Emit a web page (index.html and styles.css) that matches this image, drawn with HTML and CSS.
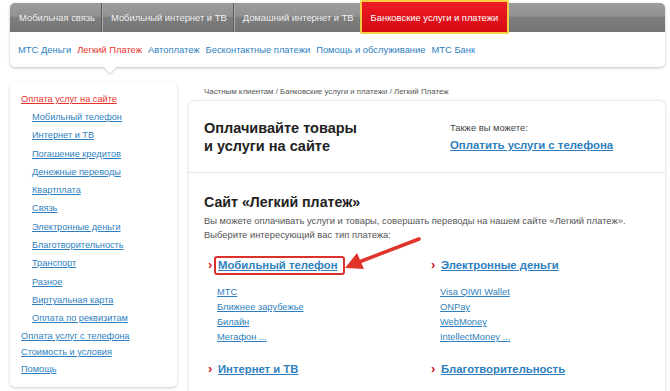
FILE: index.html
```html
<!DOCTYPE html>
<html lang="ru">
<head>
    <meta charset="UTF-8">
    <title>Легкий Платеж</title>
    <link rel="stylesheet" href="styles.css">
</head>
<body>
    <div class="header">
        <div class="topnav">
            <a class="tab">Мобильная связь</a>
            <a class="tab">Мобильный интернет и ТВ</a>
            <a class="tab">Домашний интернет и ТВ</a>
            <a class="tab active">Банковские услуги и платежи</a>
        </div>
        <div class="subnav">
            <a>МТС Деньги</a>
            <a class="current">Легкий Платеж</a>
            <a>Автоплатеж</a>
            <a>Бесконтактные платежи</a>
            <a>Помощь и обслуживание</a>
            <a>МТС Банк</a>
            <span class="notch"></span>
        </div>
    </div>

    <div class="page">
        <div class="sidebar">
            <a class="side-top current">Оплата услуг на сайте</a>
            <a class="side-sub">Мобильный телефон</a>
            <a class="side-sub">Интернет и ТВ</a>
            <a class="side-sub">Погашение кредитов</a>
            <a class="side-sub">Денежные переводы</a>
            <a class="side-sub">Квартплата</a>
            <a class="side-sub">Связь</a>
            <a class="side-sub">Электронные деньги</a>
            <a class="side-sub">Благотворительность</a>
            <a class="side-sub">Транспорт</a>
            <a class="side-sub">Разное</a>
            <a class="side-sub">Виртуальная карта</a>
            <a class="side-sub">Оплата по реквизитам</a>
            <a class="side-top">Оплата услуг с телефона</a>
            <a class="side-top">Стоимость и условия</a>
            <a class="side-top">Помощь</a>
        </div>

        <div class="content">
            <div class="crumbs">Частным клиентам / Банковские услуги и платежи / Легкий Платеж</div>
            <div class="panel">
                <div class="panel-top">
                    <h1>Оплачивайте товары<br>и услуги на сайте</h1>
                    <div class="also">
                        <div class="also-label">Также вы можете:</div>
                        <a class="also-link">Оплатить услуги с телефона</a>
                    </div>
                </div>
                <div class="panel-body">
                    <h2>Сайт «Легкий платеж»</h2>
                    <p>Вы можете оплачивать услуги и товары, совершать переводы на нашем сайте «Легкий платеж».<br>Выберите интересующий вас тип платежа:</p>
                    <div class="types">
                        <div class="type">
                            <div class="type-title"><span class="chev">›</span><a class="marked">Мобильный телефон</a></div>
                            <ul>
                                <li><a>МТС</a></li>
                                <li><a>Ближнее зарубежье</a></li>
                                <li><a>Билайн</a></li>
                                <li><a>Мегафон ...</a></li>
                            </ul>
                        </div>
                        <div class="type">
                            <div class="type-title"><span class="chev">›</span><a>Электронные деньги</a></div>
                            <ul>
                                <li><a>Visa QIWI Wallet</a></li>
                                <li><a>ONPay</a></li>
                                <li><a>WebMoney</a></li>
                                <li><a>IntellectMoney ...</a></li>
                            </ul>
                        </div>
                        <div class="type">
                            <div class="type-title"><span class="chev">›</span><a>Интернет и ТВ</a></div>
                        </div>
                        <div class="type">
                            <div class="type-title"><span class="chev">›</span><a>Благотворительность</a></div>
                        </div>
                    </div>
                </div>
            </div>
        </div>

        <!-- annotation arrow -->
        <svg class="arrow" width="80" height="40" viewBox="0 0 80 40">
            <line x1="76" y1="3" x2="16" y2="26" stroke="#e2332b" stroke-width="3.5" stroke-linecap="round"/>
            <polygon points="2,32 14,17 21,33" fill="#e2332b"/>
        </svg>
    </div>
</body>
</html>
```

FILE: styles.css
```css
body {
    margin: 0;
    background: #fff;
    font-family: "Liberation Sans", Arial, sans-serif;
    color: #333;
}
a {
    color: #2f7fc0;
    text-decoration: underline;
}

/* header */
.header {
    margin: 3px 5px 0 10px;
    border-radius: 5px;
    box-shadow: 0 1px 3px rgba(0,0,0,0.25);
    background: #fff;
    position: relative;
}
.topnav {
    display: flex;
    height: 29px;
    background: linear-gradient(#9c9c9c 0%, #929292 45%, #7e7e7e 50%, #747474 100%);
    border-radius: 5px 5px 0 0;
}
.topnav .tab {
    display: flex;
    align-items: center;
    padding: 0 6px 0 9px;
    font-size: 9.4px;
    color: #f2f2f2;
    text-decoration: none;
    border-right: 1px solid #5f5f5f;
    box-shadow: 1px 0 0 #a8a8a8;
}
.topnav .tab.active {
    margin-top: -3px;
    margin-left: -1px;
    height: 30px;
    padding: 0 9px;
    background: linear-gradient(#ee1c25, #d50a13);
    border: 2px solid #f4cf3f;
    border-radius: 2px;
    box-shadow: none;
    color: #fff;
}
.subnav {
    display: flex;
    align-items: center;
    gap: 6px;
    height: 35px;
    padding-left: 8px;
    font-size: 9.4px;
}
.subnav a {
    text-decoration: none;
    color: #2f7fc0;
}
.subnav a.current {
    color: #e8312a;
}
.notch {
    position: absolute;
    left: 96px;
    bottom: -5px;
    width: 8px;
    height: 8px;
    background: #fff;
    transform: rotate(45deg);
    box-shadow: 1px 1px 1px rgba(0,0,0,0.2);
}

/* page */
.page {
    display: flex;
    gap: 12px;
    margin: 15px 5px 0 10px;
    position: relative;
}
.sidebar {
    width: 156px;
    flex-shrink: 0;
    padding: 10px 0 8px 11px;
    border-radius: 5px;
    box-shadow: 0 1px 3px rgba(0,0,0,0.2);
    display: flex;
    flex-direction: column;
    align-items: flex-start;
    font-size: 9.2px;
    height: 287px;
}
.sidebar a {
    line-height: 18.3px;
}
.sidebar .side-sub {
    margin-left: 11px;
}
.sidebar .side-top {
    line-height: 16.7px;
}
.sidebar .side-top.current {
    color: #e8312a;
    line-height: 14px;
    margin-bottom: 2px;
}

.content {
    flex: 1;
}
.crumbs {
    font-size: 7.9px;
    color: #555;
    padding: 5px 0 0 15px;
    height: 14px;
}
.panel {
    border-radius: 5px;
    box-shadow: 0 0 3px rgba(0,0,0,0.22);
    height: 300px;
}
.panel-top {
    display: flex;
    height: 71px;
    border-bottom: 1px solid #e3e3e3;
    padding-left: 15px;
}
.panel-top h1 {
    margin: 18px 0 0;
    width: 246px;
    font-size: 14.5px;
    line-height: 18px;
    color: #222;
}
.also {
    padding-top: 20px;
}
.also-label {
    font-size: 9.4px;
    color: #444;
    line-height: 13px;
}
.also-link {
    display: block;
    margin-top: 3px;
    font-size: 11.4px;
    font-weight: bold;
    line-height: 16px;
}
.panel-body {
    padding: 20px 0 0 15px;
}
.panel-body h2 {
    margin: 0;
    font-size: 14.2px;
    line-height: 18px;
    color: #222;
}
.panel-body p {
    margin: 3px 0 0;
    font-size: 9.4px;
    line-height: 14px;
    color: #555;
}
.types {
    display: grid;
    grid-template-columns: 223px 1fr;
    margin-top: 13px;
    padding-left: 4px;
}
.type-title {
    display: flex;
    align-items: center;
    height: 20px;
    font-size: 11.3px;
    font-weight: bold;
}
.type-title a {
    padding: 0 1px;
}
.type-title a.marked {
    border: 2px solid #d9312b;
    border-radius: 3px;
    margin-left: -3px;
    padding: 0 5px 0 2px;
    line-height: 15px;
}
.chev {
    width: 9px;
    color: #d4151d;
    font-size: 13px;
    font-weight: bold;
    position: relative;
    top: -1px;
}
.type ul {
    list-style: none;
    margin: 10px 0 14px;
    padding: 0 0 0 9px;
    font-size: 9.3px;
}
.type li {
    line-height: 15px;
}

.arrow {
    position: absolute;
    left: 333px;
    top: 154px;
}
```
